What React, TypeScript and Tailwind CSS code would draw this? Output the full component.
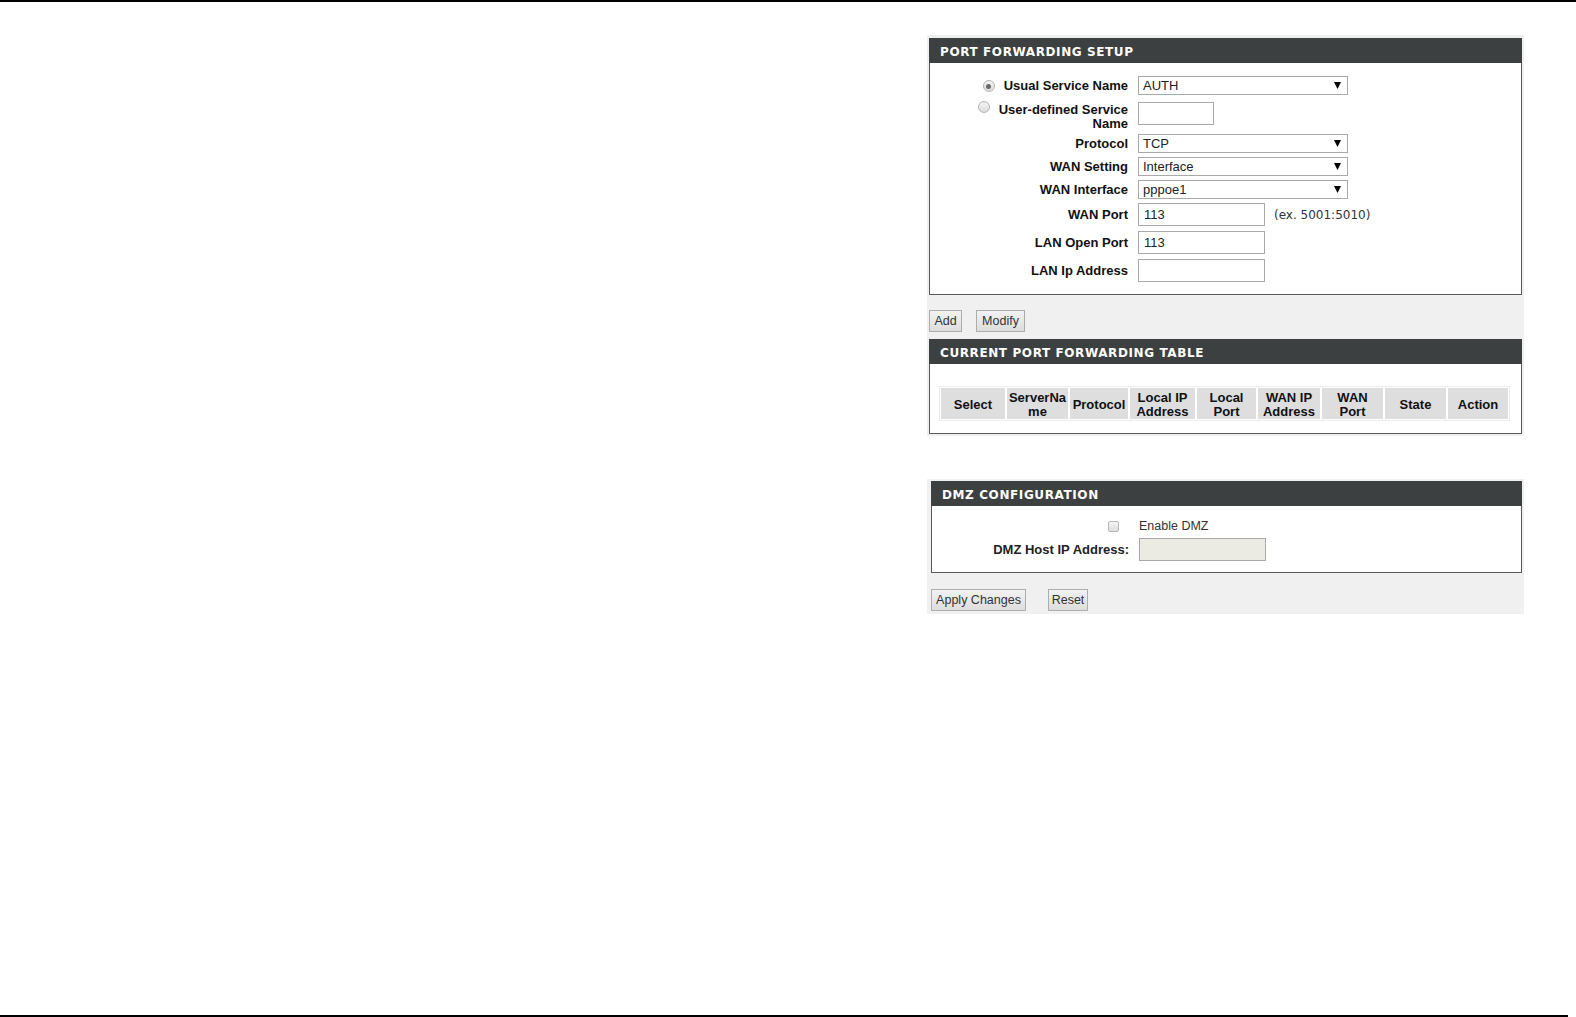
import React from 'react';

const labelFont = "font-['Liberation_Sans',Arial,sans-serif]";

function Radio({ checked }: { checked?: boolean }) {
  return (
    <span className="inline-flex items-center justify-center w-[12px] h-[12px] rounded-full border border-[#b4b4b4] bg-gradient-to-b from-[#f4f4f4] to-[#dcdcdc] align-[1px]">
      {checked && <span className="w-[5px] h-[5px] rounded-full bg-[#6a6a6a]" />}
    </span>
  );
}

function FakeSelect({ value }: { value: string }) {
  return (
    <div className="flex items-center justify-between w-[210px] h-[19px] border border-[#a9a9a9] bg-white pl-[4px] pr-[6px] text-[13px] text-[#222]">
      <span>{value}</span>
      <svg width="7" height="7" viewBox="0 0 7 7">
        <path d="M0 0H7L3.5 7Z" fill="#000" />
      </svg>
    </div>
  );
}

function FakeInput({ value, width, disabled }: { value?: string; width: string; disabled?: boolean }) {
  return (
    <div
      className={`flex items-center h-[23px] border border-[#a9a9a9] pl-[5px] text-[13px] text-[#222] ${width} ${disabled ? 'bg-[#ebebe4]' : 'bg-white'}`}
    >
      {value}
    </div>
  );
}

function Btn({ children, width }: { children: React.ReactNode; width: string }) {
  return (
    <div className={`flex items-center justify-center h-[22px] border border-[#adadad] bg-gradient-to-b from-[#f2f2f2] to-[#dddddd] text-[12.5px] text-[#333] ${width}`}>
      {children}
    </div>
  );
}

function Header({ title }: { title: string }) {
  return (
    <div className="h-[25px] bg-[#3c4041] flex items-center pl-[11px] pt-[2px] text-white text-[12px] font-bold tracking-[0.6px] font-['DejaVu_Sans',Verdana,sans-serif]">
      {title}
    </div>
  );
}

function FormRow({ label, children, h, mt }: { label: React.ReactNode; children: React.ReactNode; h: string; mt: string }) {
  return (
    <div className={`flex items-center ${h} ${mt}`}>
      <div className="w-[198px] text-right font-bold text-[13px] leading-[14px] text-[#111]">{label}</div>
      <div className="ml-[10px] flex items-center">{children}</div>
    </div>
  );
}

const columns: { label: React.ReactNode; w: string }[] = [
  { label: 'Select', w: 'w-[64px]' },
  { label: <>ServerNa<br />me</>, w: 'w-[61px]' },
  { label: 'Protocol', w: 'w-[58px]' },
  { label: <>Local IP<br />Address</>, w: 'w-[65px]' },
  { label: <>Local<br />Port</>, w: 'w-[59px]' },
  { label: <>WAN IP<br />Address</>, w: 'w-[62px]' },
  { label: <>WAN<br />Port</>, w: 'w-[61px]' },
  { label: 'State', w: 'w-[61px]' },
  { label: 'Action', w: 'w-[60px]' },
];

export default function App() {
  return (
    <div className={`w-[1576px] h-[1017px] bg-white overflow-hidden flex flex-col ${labelFont}`}>
      <div className="h-[2px] bg-black w-full" />

      {/* Port forwarding */}
      <div className="ml-[927px] mt-[33px] w-[597px] bg-[#f0f0f0] px-[2px] pt-[3px] pb-[2px]">
        <Header title="PORT FORWARDING SETUP" />
        <div className="h-[232px] bg-white border-x border-b border-[#5a5a5a] pt-[13px]">
          <FormRow h="h-[19px]" mt="mt-0" label={<><Radio checked /><span className="ml-[9px]">Usual Service Name</span></>}>
            <FakeSelect value="AUTH" />
          </FormRow>
          <FormRow
            h="h-[23px]"
            mt="mt-[7px]"
            label={
              <span className="inline-block pt-[4px]">
                <Radio />
                <span className="ml-[9px]">User-defined Service</span>
                <br />
                Name
              </span>
            }
          >
            <FakeInput width="w-[76px]" />
          </FormRow>
          <FormRow h="h-[19px]" mt="mt-[9px]" label="Protocol">
            <FakeSelect value="TCP" />
          </FormRow>
          <FormRow h="h-[19px]" mt="mt-[4px]" label="WAN Setting">
            <FakeSelect value="Interface" />
          </FormRow>
          <FormRow h="h-[19px]" mt="mt-[4px]" label="WAN Interface">
            <FakeSelect value="pppoe1" />
          </FormRow>
          <FormRow h="h-[23px]" mt="mt-[4px]" label="WAN Port">
            <FakeInput value="113" width="w-[127px]" />
            <span className="ml-[9px] text-[12px] text-[#333] font-['DejaVu_Sans',Verdana,sans-serif]">(ex. 5001:5010)</span>
          </FormRow>
          <FormRow h="h-[23px]" mt="mt-[5px]" label="LAN Open Port">
            <FakeInput value="113" width="w-[127px]" />
          </FormRow>
          <FormRow h="h-[23px]" mt="mt-[5px]" label="LAN Ip Address">
            <FakeInput width="w-[127px]" />
          </FormRow>
        </div>

        <div className="flex gap-[14px] mt-[15px] mb-[7px]">
          <Btn width="w-[33px]">Add</Btn>
          <Btn width="w-[49px]">Modify</Btn>
        </div>

        <Header title="CURRENT PORT FORWARDING TABLE" />
        <div className="h-[70px] bg-white border-x border-b border-[#5a5a5a] pt-[22px] pl-[9px]">
          <div className="inline-flex gap-[2px] p-[1px] border border-[#ececec]">
            {columns.map((c, i) => (
              <div
                key={i}
                className={`${c.w} h-[31px] bg-[#dedede] flex items-center justify-center text-center font-bold text-[13px] leading-[14px] text-[#111]`}
              >
                <span className="pt-[2px]">{c.label}</span>
              </div>
            ))}
          </div>
        </div>
      </div>

      {/* DMZ */}
      <div className="ml-[927px] mt-[43px] w-[597px] bg-[#f0f0f0] pl-[4px] pr-[2px] pt-[2px] pb-[3px]">
        <Header title="DMZ CONFIGURATION" />
        <div className="h-[67px] bg-white border-x border-b border-[#5a5a5a] pt-[13px]">
          <div className="flex items-center h-[14px]">
            <div className="w-[197px] flex justify-end pr-[10px]">
              <span className="w-[11px] h-[11px] border border-[#b8b8b8] bg-gradient-to-b from-[#f4f4f4] to-[#dedede] rounded-[2px]" />
            </div>
            <span className="ml-[10px] text-[12.5px] text-[#333]">Enable DMZ</span>
          </div>
          <div className="flex items-center h-[23px] mt-[5px]">
            <div className="w-[197px] text-right font-bold text-[13px] text-[#222]">DMZ Host IP Address:</div>
            <div className="ml-[10px]">
              <FakeInput width="w-[127px]" disabled />
            </div>
          </div>
        </div>
        <div className="flex gap-[22px] mt-[16px]">
          <Btn width="w-[95px]">Apply Changes</Btn>
          <Btn width="w-[40px]">Reset</Btn>
        </div>
      </div>

      <div className="flex-1" />
      <div className="h-[2px] bg-black w-[1568px]" />
    </div>
  );
}
